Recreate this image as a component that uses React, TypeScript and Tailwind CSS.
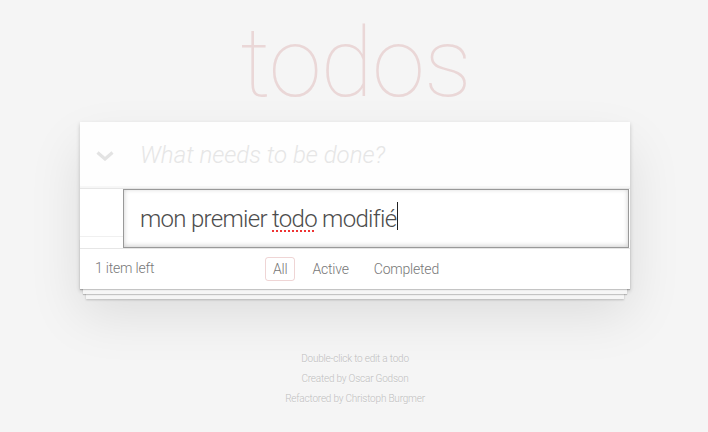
import React from "react";

export default function App() {
  return (
    <div className="min-h-screen bg-[#f5f5f5] font-['Roboto','Liberation_Sans',sans-serif] font-light text-[14px] leading-[1.4em] text-[#4d4d4d]">
      <div className="ml-[80px] w-[550px] pt-[13px]">
        <h1 className="h-[100px] pl-[1px] text-center text-[96px] leading-[100px] font-thin tracking-[-1px] text-[rgba(175,47,47,0.15)]">
          todos
        </h1>
        <section className="relative mt-[9px] bg-white shadow-[0_2px_4px_0_rgba(0,0,0,0.2),0_25px_50px_0_rgba(0,0,0,0.1)]">
          <header className="flex items-center bg-[rgba(0,0,0,0.003)] shadow-[inset_0_-2px_1px_rgba(0,0,0,0.03)]">
            <div className="flex w-[60px] shrink-0 items-center justify-center pr-[10px] pt-[2px]">
              <svg width="18" height="10" viewBox="0 0 18 10">
                <polyline
                  points="1.5,1.5 9,8 16.5,1.5"
                  fill="none"
                  stroke="#e3e3e3"
                  strokeWidth="3.2"
                />
              </svg>
            </div>
            <input
              className="h-[65.6px] flex-1 bg-transparent py-[16px] pr-[16px] text-[24px] leading-[1.4em] font-light text-[#4d4d4d] outline-none placeholder:italic placeholder:font-light placeholder:text-[#e6e6e6]"
              placeholder="What needs to be done?"
            />
          </header>
          <section className="border-t border-[#e6e6e6]">
            <div className="flex text-[24px]">
              <div className="h-[48px] w-[43px] shrink-0 border-b border-[#f0f0f0]" />
              <div className="h-[59.6px] w-[506px] border border-[#999] px-[16px] py-[12px] leading-[33.6px] tracking-[-0.7px] text-[#4d4d4d] shadow-[inset_0_-1px_5px_0_rgba(0,0,0,0.2)]">
                mon premier{" "}
                <span className="underline decoration-dotted decoration-[#e33] decoration-2 underline-offset-[4px]">
                  todo
                </span>{" "}
                modifié
                <span className="ml-[1px] inline-block h-[28px] w-[1px] bg-[#222] align-[-3px]" />
              </div>
            </div>
          </section>
          <footer className="relative flex h-[41px] items-center border-t border-[#e6e6e6] px-[15px] text-[14px] tracking-[-0.2px] text-[#777] before:pointer-events-none before:absolute before:inset-x-0 before:bottom-0 before:h-[50px] before:overflow-hidden before:content-[''] before:shadow-[0_1px_1px_rgba(0,0,0,0.2),0_8px_0_-3px_#f6f6f6,0_9px_1px_-3px_rgba(0,0,0,0.2),0_16px_0_-6px_#f6f6f6,0_17px_2px_-6px_rgba(0,0,0,0.2)]">
            <span className="w-[170px]">1 item left</span>
            <ul className="flex gap-[9px]">
              <li>
                <span className="inline-block rounded-[3px] border border-[rgba(175,47,47,0.2)] px-[7px] py-[3px] leading-[16px]">
                  All
                </span>
              </li>
              <li>
                <span className="inline-block rounded-[3px] border border-transparent px-[7px] py-[3px] leading-[16px]">
                  Active
                </span>
              </li>
              <li>
                <span className="inline-block rounded-[3px] border border-transparent px-[7px] py-[3px] leading-[16px]">
                  Completed
                </span>
              </li>
            </ul>
          </footer>
        </section>
        <footer className="mt-[65px] flex flex-col gap-[10px] text-center text-[10px] leading-[10px] tracking-[-0.2px] text-[#bfbfbf] [text-shadow:0_1px_0_rgba(255,255,255,0.5)]">
          <p>Double-click to edit a todo</p>
          <p>Created by Oscar Godson</p>
          <p>Refactored by Christoph Burgmer</p>
        </footer>
      </div>
    </div>
  );
}
